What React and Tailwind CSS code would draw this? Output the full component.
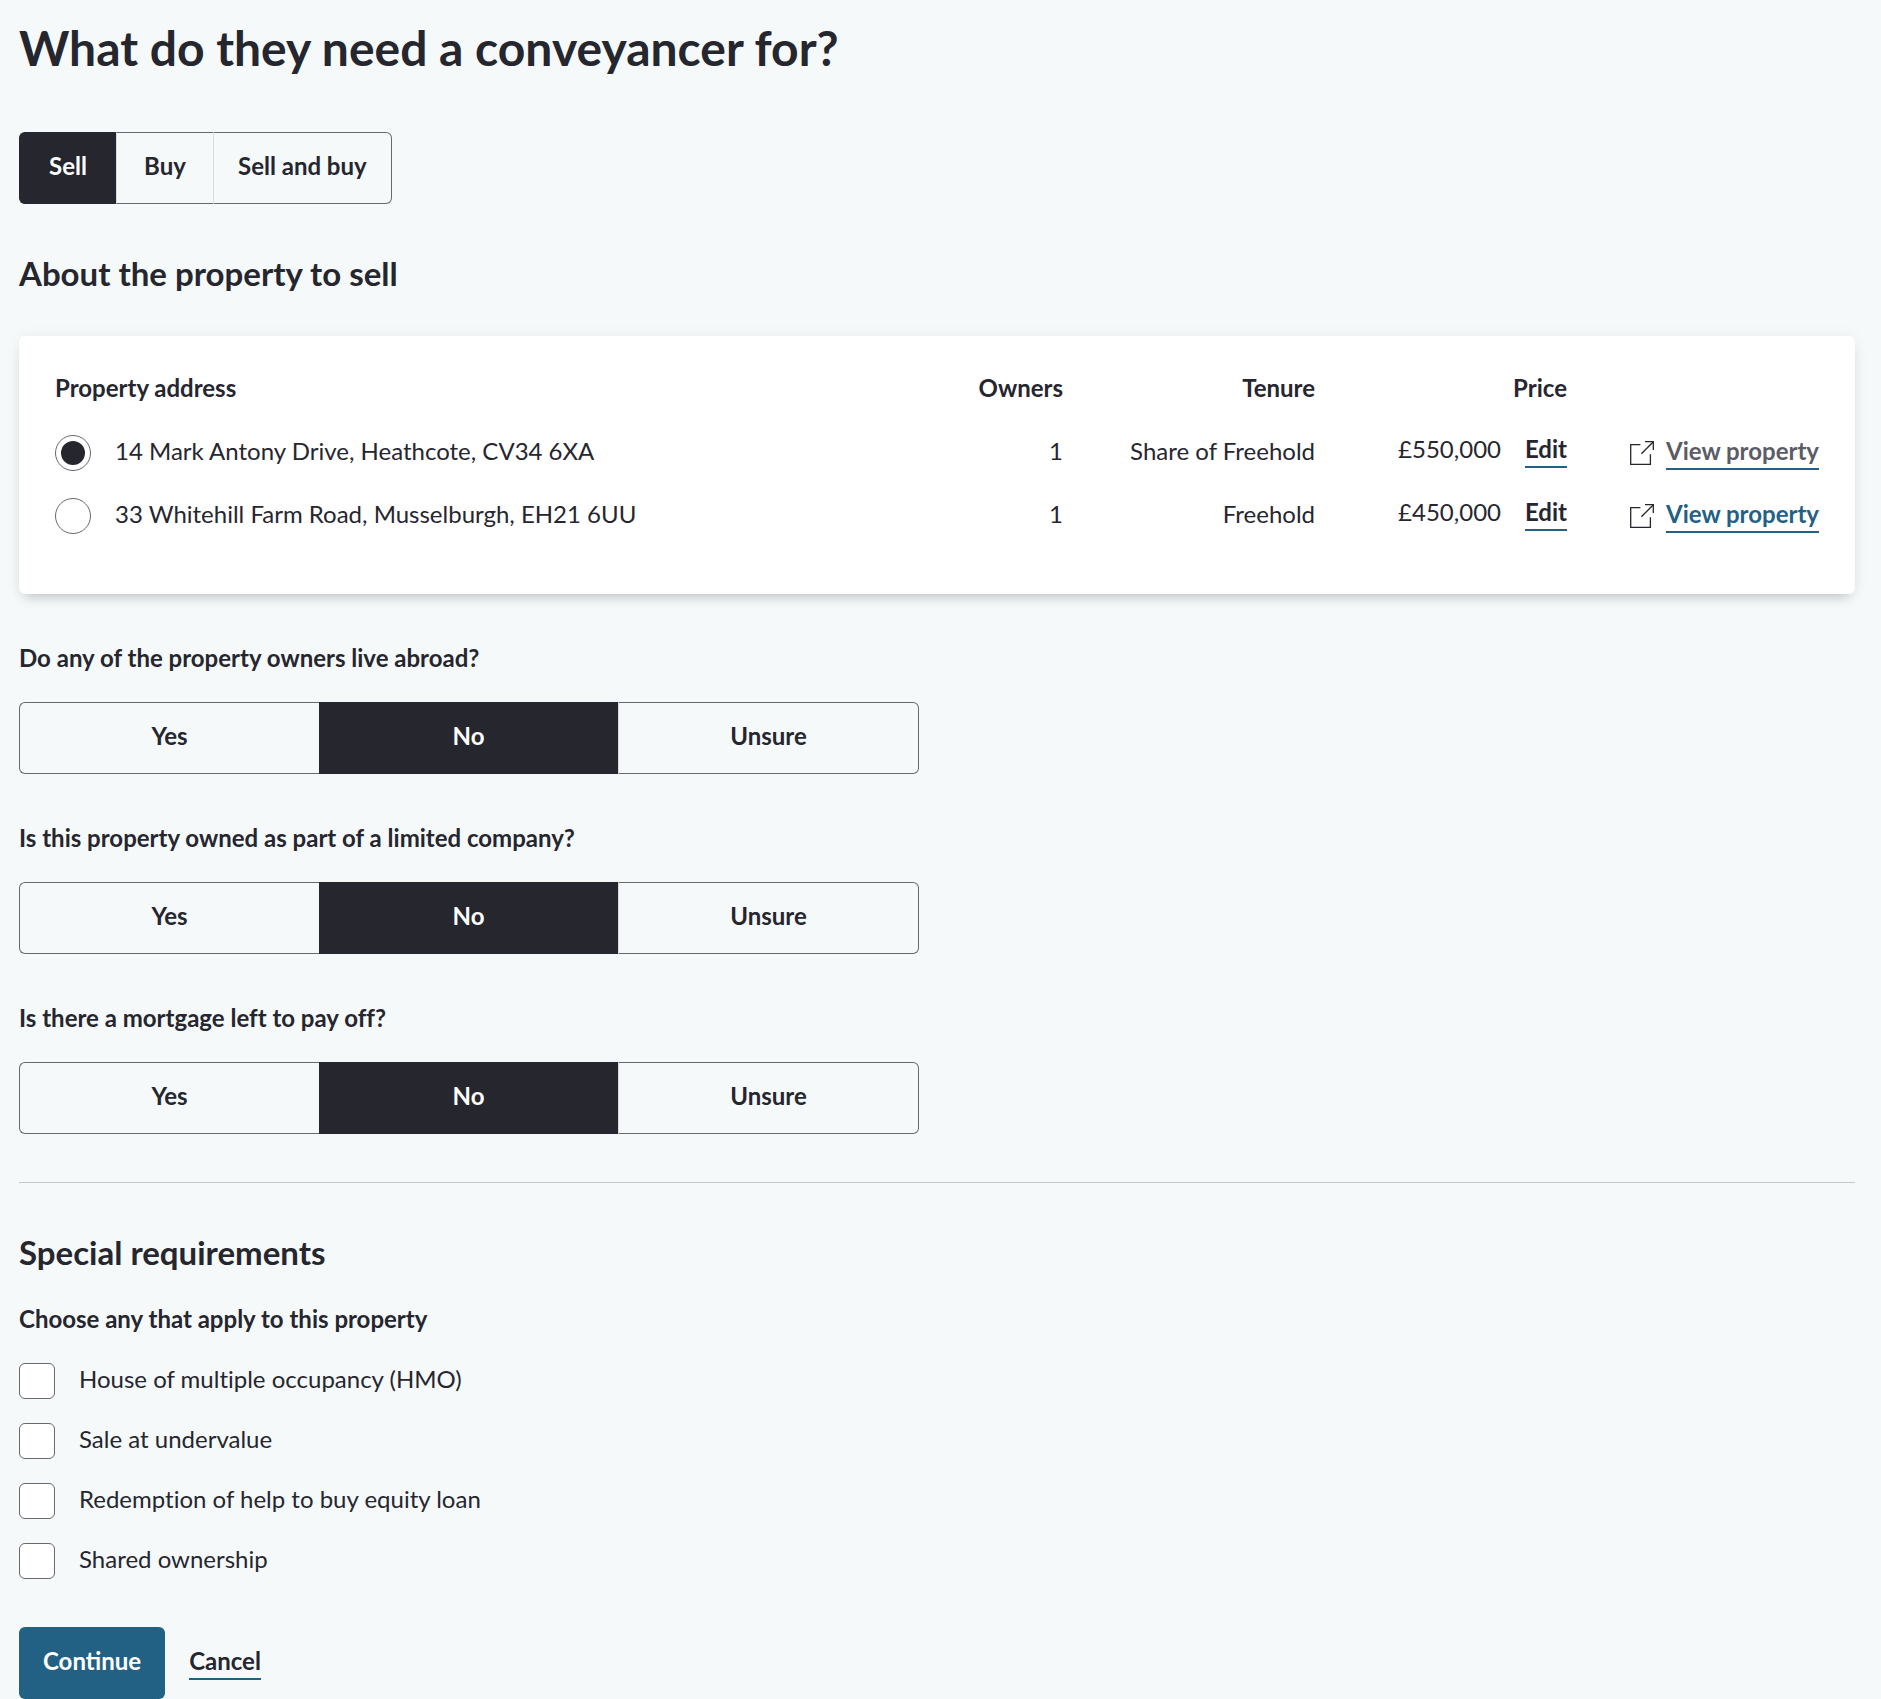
import { useState } from 'react';

const properties = [
  {
    id: 'cv34',
    address: '14 Mark Antony Drive, Heathcote, CV34 6XA',
    owners: 1,
    tenure: 'Share of Freehold',
    price: '£550,000',
    visited: true,
  },
  {
    id: 'eh21',
    address: '33 Whitehill Farm Road, Musselburgh, EH21 6UU',
    owners: 1,
    tenure: 'Freehold',
    price: '£450,000',
    visited: false,
  },
];

const questions = [
  'Do any of the property owners live abroad?',
  'Is this property owned as part of a limited company?',
  'Is there a mortgage left to pay off?',
];

const requirements = [
  'House of multiple occupancy (HMO)',
  'Sale at undervalue',
  'Redemption of help to buy equity loan',
  'Shared ownership',
];

const ExternalLinkIcon = () => (
  <svg className="w-6 h-6 shrink-0 text-[#26262f]" viewBox="0 0 24 24" fill="none" stroke="currentColor" strokeWidth="1.3" aria-hidden="true">
    <path d="M10.4 3.6H.7v19.7h19.7V13.3" />
    <path d="M11.4 12.8L23.1 1" />
    <path d="M15 .7h8.3V9" />
  </svg>
);

const ButtonGroup = ({ label, options, value, onChange, wide }) => (
  <div role="group" aria-label={label} className={wide ? 'flex w-full max-w-[900px]' : 'inline-flex'}>
    {options.map((option) => (
      <button
        key={option}
        type="button"
        aria-pressed={option === value}
        onClick={() => onChange(option)}
        className={`h-[72px] pb-1 font-bold border-y first:border-l last:border-r first:rounded-l-md last:rounded-r-md cursor-pointer ${
          wide ? 'flex-1' : 'min-w-[97px] px-6'
        } ${
          option === value
            ? 'bg-[#26262f] border-[#26262f] text-white'
            : 'border-[#66686e] not-first:border-l not-first:border-l-[#d9dddf]'
        }`}
      >
        {option}
      </button>
    ))}
  </div>
);

const Question = ({ text }) => {
  const [answer, setAnswer] = useState('No');

  return (
    <div>
      <p className="font-bold leading-9 mb-[26px] [font-variant-ligatures:none]">{text}</p>
      <ButtonGroup wide label={text} options={['Yes', 'No', 'Unsure']} value={answer} onChange={setAnswer} />
    </div>
  );
};

const PropertyTable = ({ selected, onSelect }) => (
  <div className="mt-[43px] bg-white rounded-md px-9 pt-9 pb-[47px] shadow-[0_0_16px_rgba(38,38,47,0.05),0_8px_12px_-6px_rgba(38,38,47,0.25)]">
    <table className="w-full table-fixed">
      <thead>
        <tr className="h-[49px] align-top leading-8">
          <th className="w-3/7 text-left font-bold">Property address</th>
          <th className="text-right font-bold">Owners</th>
          <th className="text-right font-bold">Tenure</th>
          <th className="text-right font-bold">Price</th>
          <td></td>
        </tr>
      </thead>
      <tbody>
        {properties.map((property) => (
          <tr key={property.id} className="h-[63px]">
            <td>
              <label className="flex items-center gap-6">
                <input
                  type="radio"
                  name="property"
                  checked={selected === property.id}
                  onChange={() => onSelect(property.id)}
                  className="appearance-none w-9 h-9 shrink-0 rounded-full border border-[#66686e] bg-white bg-clip-content p-[5px] checked:bg-[#26262f]"
                />
                <span className="pb-[3px]">{property.address}</span>
              </label>
            </td>
            <td className="text-right pb-[3px]">{property.owners}</td>
            <td className="text-right pb-[3px]">{property.tenure}</td>
            <td>
              <div className="flex justify-end items-baseline gap-6 pb-[2px]">
                <span>{property.price}</span>
                <button type="button" className="font-bold pb-[3px] border-b-2 border-[#226184] cursor-pointer">
                  Edit
                </button>
              </div>
            </td>
            <td>
              <div className="flex justify-end items-center gap-3">
                <ExternalLinkIcon />
                <a
                  href="#"
                  className={`font-bold pt-[2px] pb-[3px] border-b-2 border-[#226184] ${
                    property.visited ? 'text-[#5b5c65]' : 'text-[#226184]'
                  }`}
                >
                  View property
                </a>
              </div>
            </td>
          </tr>
        ))}
      </tbody>
    </table>
  </div>
);

const App = () => {
  const [service, setService] = useState('Sell');
  const [selected, setSelected] = useState('cv34');

  return (
    <main className="min-h-screen bg-[#f5f9fa] pl-[19px] pr-[26px] pt-[18px] font-[Lato,sans-serif] text-2xl leading-7 text-[#26262f]">
      <h1 className="text-5xl leading-[60px] font-bold">What do they need a conveyancer for?</h1>

      <div className="mt-[54px] flex">
        <ButtonGroup label="Service" options={['Sell', 'Buy', 'Sell and buy']} value={service} onChange={setService} />
      </div>

      <h2 className="mt-[49px] text-[33px] leading-10 font-bold">About the property to sell</h2>
      <PropertyTable selected={selected} onSelect={setSelected} />

      <div className="mt-[46px] flex flex-col gap-[46px]">
        {questions.map((text) => (
          <Question key={text} text={text} />
        ))}
      </div>

      <hr className="mt-12 border-[#c4c9cb]" />

      <h2 className="mt-[49px] text-[33px] leading-10 font-bold">Special requirements</h2>
      <fieldset className="mt-[29px]">
        <legend className="font-bold leading-9">Choose any that apply to this property</legend>
        <div className="mt-[26px] flex flex-col gap-6 [font-variant-ligatures:none]">
          {requirements.map((requirement) => (
            <label key={requirement} className="flex items-center gap-6">
              <input type="checkbox" className="appearance-none w-9 h-9 shrink-0 rounded-md border border-[#66686e] bg-white checked:bg-[#26262f]" />
              <span className="pb-[5px]">{requirement}</span>
            </label>
          ))}
        </div>
      </fieldset>

      <div className="mt-12 flex items-center gap-6">
        <button type="button" className="h-[72px] px-6 pb-1 rounded-md bg-[#226184] text-white font-bold cursor-pointer">
          Continue
        </button>
        <a href="#" className="font-bold pb-[3px] border-b-2 border-[#226184]">
          Cancel
        </a>
      </div>
    </main>
  );
};

export default App;
